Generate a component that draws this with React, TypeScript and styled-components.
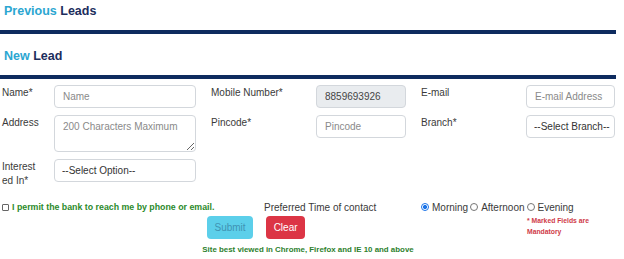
import React from 'react';
import styled, { createGlobalStyle } from 'styled-components';

const GlobalStyle = createGlobalStyle`
  body {
    margin: 0;
    background: #ffffff;
    font-family: "Liberation Sans", Arial, sans-serif;
    color: #3a3a3a;
  }
`;

const Page = styled.div`
  width: 616px;
`;

const SectionHeading = styled.div<{ $top: number; $bottom: number }>`
  font-size: 12.5px;
  font-weight: 700;
  line-height: 15px;
  color: #1c2d5c;
  padding: ${(p) => p.$top}px 0 ${(p) => p.$bottom}px 4px;
  border-bottom: 4px solid #0e2b5f;
`;

const Accent = styled.span`
  color: #2ba6d1;
`;

const FormGrid = styled.div`
  display: grid;
  grid-template-columns: 52px 142px 120px 90px 120px 89px;
  row-gap: 7px;
  align-items: start;
  margin-top: 6px;
  padding-left: 2px;
`;

const FieldLabel = styled.label<{ $indent?: boolean; $narrow?: boolean }>`
  font-size: 10px;
  line-height: 14px;
  padding-top: 1px;
  padding-left: ${(p) => (p.$indent ? '15px' : '0')};
  color: #3a3a3a;
  ${(p) => (p.$narrow ? 'max-width: 37px; word-break: break-all;' : '')}
`;

const TextInput = styled.input<{ $filled?: boolean }>`
  box-sizing: border-box;
  width: 100%;
  height: 23px;
  margin: 0;
  padding: 0 8px;
  border: 1px solid #d3d7dc;
  border-radius: 4px;
  font-family: "Liberation Sans", Arial, sans-serif;
  font-size: 10px;
  color: #454545;
  background: ${(p) => (p.$filled ? '#e9ecef' : '#ffffff')};
  outline: none;

  &::placeholder {
    color: #8a8a8a;
  }
`;

const TextArea = styled.textarea`
  box-sizing: border-box;
  width: 100%;
  height: 37px;
  margin: 0;
  padding: 5px 8px;
  border: 1px solid #d3d7dc;
  border-radius: 4px;
  font-family: "Liberation Sans", Arial, sans-serif;
  font-size: 10px;
  color: #454545;
  outline: none;
  display: block;

  &::placeholder {
    color: #8a8a8a;
  }
`;

const SelectBox = styled.select`
  box-sizing: border-box;
  width: 100%;
  height: 23px;
  margin: 0;
  padding: 0 0 0 7px;
  border: 1px solid #d3d7dc;
  border-radius: 4px;
  font-family: "Liberation Sans", Arial, sans-serif;
  font-size: 10px;
  color: #333333;
  background: #ffffff;
  appearance: none;
  -webkit-appearance: none;
  outline: none;
`;

const Empty = styled.div``;

const OptionsRow = styled.div`
  display: flex;
  align-items: center;
  height: 12px;
  margin-top: 13px;
`;

const ConsentLabel = styled.label`
  display: flex;
  align-items: center;
  gap: 3px;
  width: 262px;
  padding-left: 2px;
  font-size: 8.8px;
  font-weight: 700;
  color: #2b8a2b;
`;

const CheckBox = styled.span`
  box-sizing: border-box;
  width: 7px;
  height: 7px;
  border: 1px solid #666;
  border-radius: 1px;
  background: #fff;
`;

const PreferredLabel = styled.span`
  width: 157px;
  font-size: 10px;
  color: #3a3a3a;
`;

const RadioGroup = styled.div`
  display: flex;
  align-items: center;
  gap: 2px;
`;

const RadioOption = styled.label`
  display: flex;
  align-items: center;
  gap: 3px;
  font-size: 10px;
  color: #3a3a3a;
`;

const RadioDot = styled.span<{ $checked?: boolean }>`
  box-sizing: border-box;
  width: 8px;
  height: 8px;
  border-radius: 50%;
  border: 1px solid ${(p) => (p.$checked ? '#1a73e8' : '#767676')};
  background: ${(p) => (p.$checked ? 'radial-gradient(circle, #1a73e8 0 1.8px, #fff 2.3px)' : '#fff')};
`;

const ActionsRow = styled.div`
  display: flex;
  align-items: flex-start;
  margin-top: 3px;
`;

const ButtonBar = styled.div`
  display: flex;
  gap: 13px;
  padding-left: 207px;
`;

const Button = styled.button<{ $variant: 'info' | 'danger' }>`
  height: 23px;
  padding: 0 7.5px;
  border: none;
  border-radius: 4px;
  font-family: "Liberation Sans", Arial, sans-serif;
  font-size: 10px;
  background: ${(p) => (p.$variant === 'info' ? '#5ccfea' : '#dc3545')};
  color: ${(p) => (p.$variant === 'info' ? '#3f93b3' : '#ffffff')};
`;

const Note = styled.div`
  margin-left: auto;
  width: 89px;
  margin-top: -1px;
  font-size: 6.8px;
  font-weight: 700;
  line-height: 11px;
  color: #cf3a48;
`;

const Footer = styled.div`
  margin-top: 5px;
  text-align: center;
  font-size: 7.9px;
  font-weight: 700;
  line-height: 11px;
  color: #2d7f2d;
`;

const App = () => {
  return (
    <Page>
      <GlobalStyle />
      <SectionHeading $top={4} $bottom={11}>
        <Accent>Previous</Accent> Leads
      </SectionHeading>
      <SectionHeading $top={15} $bottom={11}>
        <Accent>New</Accent> Lead
      </SectionHeading>

      <FormGrid>
        <FieldLabel>Name*</FieldLabel>
        <TextInput placeholder="Name" />
        <FieldLabel $indent>Mobile Number*</FieldLabel>
        <TextInput $filled readOnly value="8859693926" />
        <FieldLabel $indent>E-mail</FieldLabel>
        <TextInput placeholder="E-mail Address" />

        <FieldLabel>Address</FieldLabel>
        <TextArea placeholder="200 Characters Maximum" />
        <FieldLabel $indent>Pincode*</FieldLabel>
        <TextInput placeholder="Pincode" />
        <FieldLabel $indent>Branch*</FieldLabel>
        <SelectBox defaultValue="">
          <option value="">--Select Branch--</option>
        </SelectBox>

        <FieldLabel $narrow>Interested In*</FieldLabel>
        <SelectBox defaultValue="">
          <option value="">--Select Option--</option>
        </SelectBox>
        <Empty />
      </FormGrid>

      <OptionsRow>
        <ConsentLabel>
          <CheckBox />
          I permit the bank to reach me by phone or email.
        </ConsentLabel>
        <PreferredLabel>Preferred Time of contact</PreferredLabel>
        <RadioGroup>
          <RadioOption>
            <RadioDot $checked />
            Morning
          </RadioOption>
          <RadioOption>
            <RadioDot />
            Afternoon
          </RadioOption>
          <RadioOption>
            <RadioDot />
            Evening
          </RadioOption>
        </RadioGroup>
      </OptionsRow>

      <ActionsRow>
        <ButtonBar>
          <Button $variant="info">Submit</Button>
          <Button $variant="danger">Clear</Button>
        </ButtonBar>
        <Note>* Marked Fields are Mandatory</Note>
      </ActionsRow>

      <Footer>Site best viewed in Chrome, Firefox and IE 10 and above</Footer>
    </Page>
  );
};

export default App;
